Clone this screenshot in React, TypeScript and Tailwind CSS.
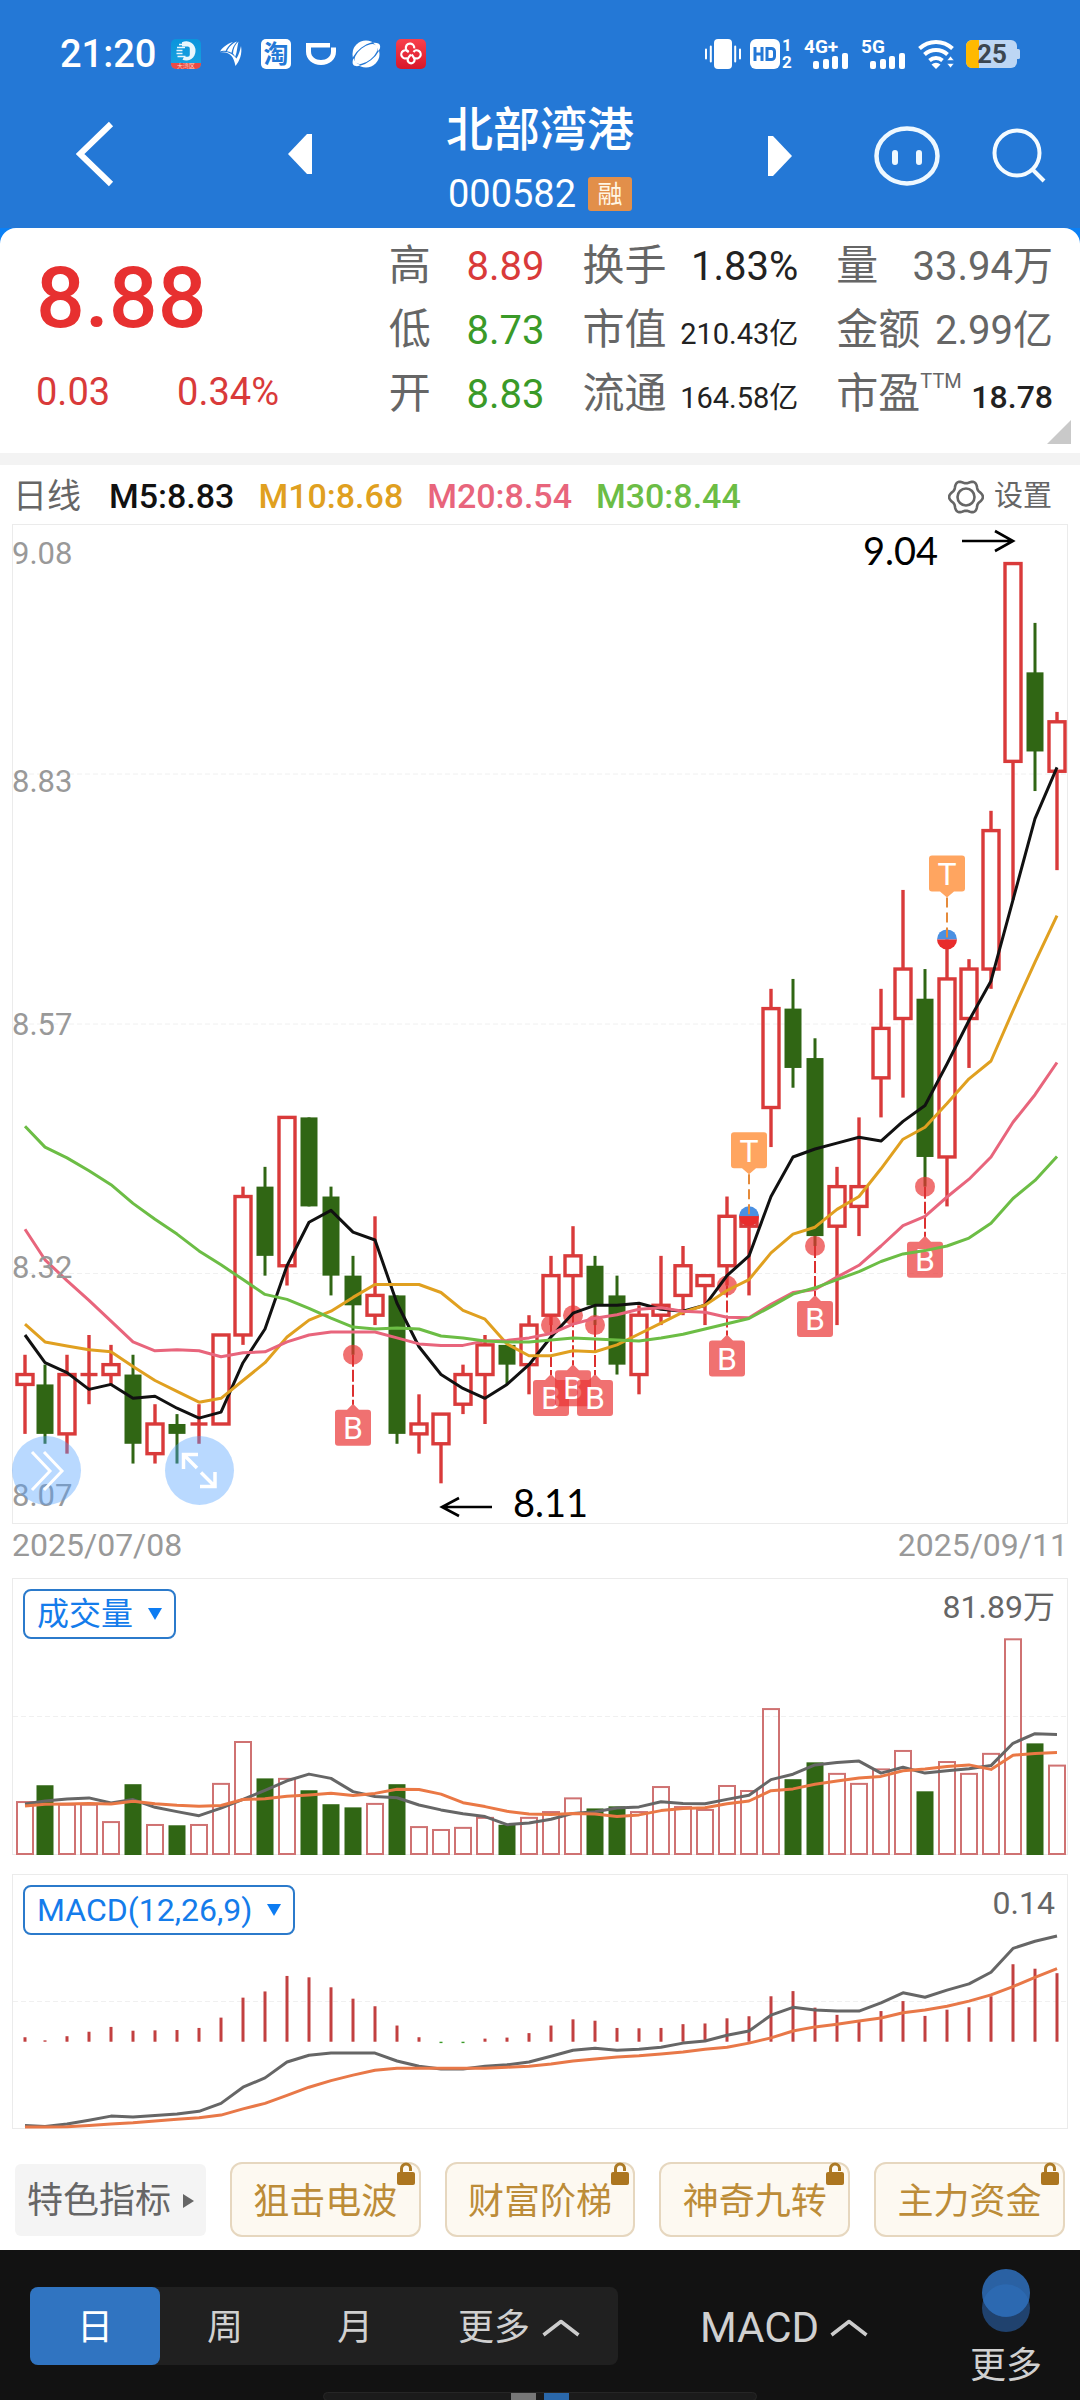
import React, { useState } from "react";

type Candle = [open: number, high: number, low: number, close: number];
type Marker = { day: number; kind: "B" | "T" };

// Daily candles, 2025/07/08 - 2025/09/11
const CANDLES: Candle[] = [
  [8.21, 8.24, 8.16, 8.22], [8.21, 8.23, 8.15, 8.16], [8.16, 8.24, 8.14, 8.22], [8.22, 8.26, 8.19, 8.22],
  [8.22, 8.25, 8.21, 8.23], [8.22, 8.24, 8.13, 8.15], [8.14, 8.19, 8.13, 8.17], [8.17, 8.18, 8.13, 8.16],
  [8.17, 8.19, 8.15, 8.17], [8.17, 8.26, 8.17, 8.26], [8.26, 8.41, 8.25, 8.4], [8.41, 8.43, 8.32, 8.34],
  [8.33, 8.48, 8.31, 8.48], [8.48, 8.48, 8.39, 8.39], [8.4, 8.41, 8.3, 8.32], [8.32, 8.34, 8.24, 8.29],
  [8.28, 8.38, 8.27, 8.3], [8.3, 8.3, 8.15, 8.16], [8.16, 8.2, 8.14, 8.17], [8.15, 8.18, 8.11, 8.18],
  [8.19, 8.23, 8.18, 8.22], [8.22, 8.26, 8.17, 8.25], [8.25, 8.25, 8.21, 8.23], [8.23, 8.28, 8.2, 8.27],
  [8.28, 8.34, 8.27, 8.32], [8.32, 8.37, 8.28, 8.34], [8.33, 8.34, 8.27, 8.29], [8.3, 8.32, 8.22, 8.23],
  [8.22, 8.29, 8.2, 8.28], [8.28, 8.34, 8.27, 8.29], [8.3, 8.35, 8.28, 8.33], [8.31, 8.32, 8.27, 8.32],
  [8.33, 8.4, 8.31, 8.38], [8.37, 8.38, 8.3, 8.38], [8.49, 8.61, 8.45, 8.59], [8.59, 8.62, 8.51, 8.53],
  [8.54, 8.56, 8.35, 8.36], [8.37, 8.43, 8.27, 8.41], [8.39, 8.48, 8.36, 8.41], [8.52, 8.61, 8.48, 8.57],
  [8.58, 8.71, 8.5, 8.63], [8.6, 8.63, 8.41, 8.44], [8.44, 8.66, 8.39, 8.62], [8.58, 8.64, 8.53, 8.63],
  [8.63, 8.79, 8.61, 8.77], [8.84, 9.04, 8.7, 9.04], [8.93, 8.98, 8.81, 8.85], [8.83, 8.89, 8.73, 8.88],
];

const CLOSES = CANDLES.map((c) => c[3]);

// Averages of the first days, they need closes from before the visible range
const M5_HEAD = [8.26, 8.232, 8.222, 8.205];
const M10_HEAD = [8.271, 8.253, 8.249, 8.245, 8.243, 8.228, 8.214, 8.203, 8.192];
const M20_HEAD = [
  8.367, 8.336, 8.315, 8.295, 8.274, 8.253, 8.244, 8.245, 8.244, 8.238, 8.242, 8.243, 8.253, 8.26, 8.263, 8.263,
  8.263, 8.257, 8.251,
];
const M30_HEAD = [
  8.471, 8.45, 8.439, 8.426, 8.412, 8.393, 8.377, 8.362, 8.345, 8.331, 8.316, 8.301, 8.296, 8.287, 8.277, 8.268,
  8.266, 8.267, 8.266, 8.259, 8.257, 8.254, 8.253, 8.253, 8.255, 8.257, 8.256, 8.255, 8.254,
];

const MARKERS: Marker[] = [
  { day: 15, kind: "B" },
  { day: 24, kind: "B" },
  { day: 25, kind: "B" },
  { day: 26, kind: "B" },
  { day: 32, kind: "B" },
  { day: 33, kind: "T" },
  { day: 36, kind: "B" },
  { day: 41, kind: "B" },
  { day: 42, kind: "T" },
];

const VOLUMES = [
  20.1, 26.1, 19.1, 19.1, 12.5, 26.5, 11.4, 10.9, 11.4, 27, 42.9, 28.7, 28.9, 24.2, 18.9, 17.7, 19.4, 26.5, 10.6, 9.5,
  10.3, 14.1, 11.1, 14.1, 16.3, 21.5, 17.3, 18.1, 16.3, 25.8, 18.2, 17.1, 26.2, 24.3, 55.4, 28.4, 34.8, 30.8, 27,
  32.5, 39.5, 23.8, 35.3, 30.8, 38.4, 81.89, 42, 33.94,
];
const VOL5_HEAD = [19, 20.1, 20.9, 21.3];
const VOL10_HEAD = [18.2, 18.9, 19, 19.2, 19, 20, 19.1, 18.5, 18.1];

// MACD pane grid: rows run from 40 (top) to 779 (bottom), zero is at 527
const MACD_TOP = 40;
const MACD_ZERO = 527;
const MACD_BARS = [
  13, 4, 16, 29, 43, 32, 33, 34, 40, 70, 128, 146, 191, 187, 158, 125, 103, 47, 13, -4, -4, 9, 12, 25, 47, 65, 61, 40,
  39, 40, 51, 53, 68, 74, 132, 147, 99, 78, 62, 89, 118, 75, 93, 100, 132, 225, 212, 199,
];
const MACD_DIF = [
  770, 773, 766, 755, 743, 746, 741, 737, 729, 706, 659, 632, 586, 566, 560, 560, 560, 583, 598, 606, 606, 598, 594,
  586, 569, 552, 546, 552, 549, 543, 531, 525, 508, 496, 450, 427, 435, 438, 438, 414, 385, 398, 377, 359, 325, 256,
  235, 220,
];
const MACD_DEA = [
  775, 775, 774, 770, 766, 762, 757, 752, 748, 740, 722, 706, 683, 659, 640, 624, 610, 604, 604, 604, 604, 604, 601,
  598, 592, 583, 577, 571, 568, 563, 557, 549, 543, 531, 516, 496, 484, 476, 467, 458, 443, 435, 424, 409, 391, 367,
  340, 315,
];

const RED = "#d93a3a";
const GREEN = "#306614";

const dayX = (i: number) => (i === 0 ? 13 : 11 + i * 22);
const priceY = (p: number) => (9.08 - p) * 989;
const volumeY = (v: number) => 276 - v * 2.634;
const macdY = (v: number) => (v - MACD_TOP) * 0.3444;

function movingAverage(values: number[], size: number, head: number[]) {
  return values.map((_, i) => {
    if (i < size - 1) return head[i];
    const slice = values.slice(i - size + 1, i + 1);
    return slice.reduce((a, b) => a + b, 0) / size;
  });
}

const toPoints = (values: number[], y: (v: number) => number) =>
  values.map((v, i) => `${dayX(i)},${y(v).toFixed(1)}`).join(" ");

const isUp = (i: number) => CANDLES[i][3] >= CANDLES[i][0];

function Line({ values, y, color }: { values: number[]; y: (v: number) => number; color: string }) {
  return <polyline points={toPoints(values, y)} fill="none" stroke={color} strokeWidth={3} strokeLinejoin="round" />;
}

function GridLine({ y }: { y: number }) {
  return <line x1={1} x2={1055} y1={y} y2={y} stroke="#f0f0f0" strokeWidth={1} strokeDasharray="5 3" />;
}

function Frame({ height }: { height: number }) {
  return <rect x={0.5} y={0.5} width={1055} height={height - 1} fill="none" stroke="#ebebeb" />;
}

/* ---------- status bar ---------- */

function SignalBars() {
  return (
    <g fill="#fff">
      <rect x={9} y={22} width={6} height={8} rx={2} />
      <rect x={19} y={20} width={6} height={10} rx={2} />
      <rect x={28} y={17} width={6} height={13} rx={2} />
      <rect x={38} y={14} width={6} height={16} rx={2} />
    </g>
  );
}

function StatusBar() {
  return (
    <div className="flex h-[108px] items-center justify-between pl-[60px] pr-[60px] text-white">
      <div className="flex items-center gap-[15px]">
        <span className="text-[38px] font-medium leading-none">21:20</span>
        <svg className="overflow-visible" width={30} height={30} viewBox="0 0 30 30" aria-hidden="true">
          <defs>
            <linearGradient id="bank" x1="0" y1="0" x2="0" y2="1">
              <stop offset="0" stopColor="#0a94dc" />
              <stop offset="1" stopColor="#1aa3e0" />
            </linearGradient>
          </defs>
          <rect width={30} height={30} rx={5} fill="url(#bank)" />
          <path d="M0 24h30v1a5 5 0 0 1-5 5H5a5 5 0 0 1-5-5z" fill="#ea4a45" />
          <path
            d="M11 3.300A9.300 9.300 0 0 1 24.500 12a9.400 9.400 0 0 1-13 8.800l1.500-3h3.800a2 2 0 0 0 2-2V9.500a2 2 0 0 0-2-2H11z"
            fill="#e8f6fd"
          />
          <path d="M8 5.500h5M6 8.500h8M5.500 11.500h6M5.500 14.500h6M6.500 17.500h8" stroke="#e8f6fd" strokeWidth={1.4} />
          <text x={15} y={29} fontSize={6} textAnchor="middle" fill="#ffd9c8">大湾区</text>
        </svg>
        <svg width={30} height={30} viewBox="0 0 30 30" fill="#fff" aria-hidden="true">
          <path d="M4 12.500C6 9 10.500 5 17 3c-3.500 2.500-6 5.500-7.500 9-2-.3-3.700-.2-5.500.5z" />
          <path d="M11 12.300C12.500 8.500 16 4.500 21 2.500c-3 3.500-4.700 7-5.500 11.200-1.500-.8-2.800-1.200-4.500-1.400z" />
          <path d="M17 14.500c.3-4.500 2-9.200 5.500-12-1 4-1.200 7-2 11-.4 2-.9 3.200-1.500 4.500-.4-1.400-1-2.500-2-3.500z" />
          <path d="M4 13.500c5-1 9 .5 11.500 3.500 1.800 2.300 3 5 4 10C23.500 22 26.500 15 25 7c-1 5-2.300 9-4.500 12.500C17 15 10 11 4 13.500z" />
        </svg>
        <svg className="overflow-visible" width={30} height={30} viewBox="0 0 30 30" aria-hidden="true">
          <rect width={30} height={30} rx={5} fill="#fff" />
          <text x={15} y={24} fontSize={25} fontWeight={700} textAnchor="middle" fill="#2478d6">淘</text>
        </svg>
        <svg width={30} height={30} viewBox="0 0 30 30" aria-hidden="true">
          <path d="M0 4h24v4.500H5v4C5 18 9.500 21 15 21s10-3 10-8.500v-4h5v4C30 20.500 23.500 26 15 26S0 20.500 0 12.500z" fill="#fff" />
        </svg>
        <svg width={30} height={30} viewBox="0 0 30 30" aria-hidden="true">
          <circle cx={15} cy={15} r={13.5} fill="#fff" />
          <g transform="rotate(-38 15 15)">
            <ellipse cx={15} cy={15} rx={17} ry={8} fill="#2478d6" />
            <ellipse cx={15} cy={15} rx={13.500} ry={7} fill="#fff" />
            <path d="M2.500 10.500C-1 13-2.500 15-1 17.500s4 2.700 5 2.500C2 18 1.500 14 2.500 10.500zM27.500 10.500c3.500 2.500 5 4.500 3.500 7s-4 2.700-5 2.500c2-2 2.500-6 1.500-9.500z" fill="#fff" />
          </g>
        </svg>
        <svg width={30} height={30} viewBox="0 0 30 30" aria-hidden="true">
          <defs>
            <linearGradient id="union" x1="0" y1="0" x2="0" y2="1">
              <stop offset="0" stopColor="#f8404c" />
              <stop offset="1" stopColor="#d8172a" />
            </linearGradient>
          </defs>
          <rect width={30} height={30} rx={5} fill="url(#union)" />
          <g fill="none" stroke="#fff" strokeWidth={2.2}>
            <path d="M12.800 12.800a4.200 4.200 0 1 1 5.400-3.500" />
            <path d="M17.500 13a4 4 0 1 1 1.500 6" />
            <path d="M15 15.500c-1.500 1.700-3.400 3.200-3.400 5.300a3.500 3.500 0 0 0 7 0c0-2-1.600-3.500-3-5.300" />
            <path d="M12.500 13a4 4 0 1 0-1.500 6" />
          </g>
        </svg>
      </div>
      <div className="flex items-center">
        <svg width={36} height={30} viewBox="0 0 36 30" fill="#fff" aria-hidden="true">
          <rect x={9} y={0} width={18} height={30} rx={4} />
          <path d="M1 10.500v9M5.800 7.500v15M30.200 7.500v15M35 10.500v9" stroke="#fff" strokeWidth={2} strokeLinecap="round" />
        </svg>
        <svg className="ml-[9px] overflow-visible" width={43} height={30} viewBox="0 0 43 30" aria-hidden="true">
          <rect width={30} height={30} rx={6} fill="#fff" />
          <path d="M5 8v14M12 8v14M5 15h7M17 9.500h4.500a3 3 0 0 1 3 3v5a3 3 0 0 1-3 3H17z" fill="none" stroke="#2478d6" strokeWidth={3} />
          <text x={37} y={12} fontSize={17} fontWeight={700} textAnchor="middle" fill="#fff">1</text>
          <text x={37} y={29} fontSize={17} fontWeight={700} textAnchor="middle" fill="#fff">2</text>
        </svg>
        <svg className="ml-[11px] overflow-visible" width={45} height={30} viewBox="0 0 45 30" aria-hidden="true">
          <text x={0} y={14} fontSize={19} fontWeight={700} fill="#fff">4G+</text>
          <SignalBars />
        </svg>
        <svg className="ml-3 overflow-visible" width={45} height={30} viewBox="0 0 45 30" aria-hidden="true">
          <text x={0} y={14} fontSize={19} fontWeight={700} fill="#fff">5G</text>
          <SignalBars />
        </svg>
        <svg className="ml-3" width={37} height={30} viewBox="0 0 37 30" aria-hidden="true">
          <g fill="none" stroke="#fff" strokeWidth={4}>
            <path d="M1.500 9.500a24 24 0 0 1 33 0" />
            <path d="M6.500 15.500a17 17 0 0 1 23 0" />
            <path d="M11.500 21.500a10 10 0 0 1 13 0" />
          </g>
          <path d="M13.500 25.500a7 7 0 0 1 9 0L18 30z" fill="#fff" />
          <path d="M29 21.500l3.500-4.500 3.500 4.500zM29 24.500h7L32.500 29z" fill="#fff" stroke="#2478d6" strokeWidth={0.6} />
        </svg>
        <svg className="ml-[11px] overflow-visible" width={54} height={28} viewBox="0 0 54 28" aria-label="25%">
          <rect width={51} height={28} rx={6} fill="#bdd6f4" />
          <path d="M51 9h1.500a1.500 1.500 0 0 1 1.500 1.500v7a1.500 1.500 0 0 1-1.500 1.500H51z" fill="#bdd6f4" />
          <path d="M6 0h7v28H6a6 6 0 0 1-6-6V6a6 6 0 0 1 6-6z" fill="#ffb900" />
          <text x={26} y={23} fontSize={26} fontWeight={700} textAnchor="middle" fill="#3c4650">25</text>
        </svg>
      </div>
    </div>
  );
}

/* ---------- title bar ---------- */

function TitleBar() {
  return (
    <div className="grid h-[120px] grid-cols-[1fr_auto_1fr] items-start text-white">
      <div className="flex items-center justify-between pl-[76px] pr-[134px] pt-[13px]">
        <button aria-label="返回">
          <svg width={38} height={66} viewBox="0 0 38 66">
            <path d="M35 3L4 33l31 30" fill="none" stroke="#fff" strokeWidth={6} />
          </svg>
        </button>
        <button aria-label="上一只">
          <svg width={24} height={40} viewBox="0 0 24 40">
            <path d="M24 0h-5L0 20l19 20h5z" fill="#fff" />
          </svg>
        </button>
      </div>
      <div className="-mt-0.5 flex flex-col items-center">
        <h1 className="text-[47px] font-medium leading-[48px]">北部湾港</h1>
        <div className="mt-5 flex items-center gap-3">
          <span className="text-[38px] leading-[40px]">000582</span>
          <span className="flex h-[34px] w-11 items-center justify-center rounded-[3px] bg-[#e28f4a] text-[25px] leading-none text-[#fff6e4]">
            融
          </span>
        </div>
      </div>
      <div className="flex items-center justify-between pl-[134px] pr-[34px] pt-[18px]">
        <button aria-label="下一只">
          <svg width={24} height={40} viewBox="0 0 24 40">
            <path d="M0 0h5l19 20L5 40H0z" fill="#fff" />
          </svg>
        </button>
        <div className="flex items-center gap-[52px]">
          <button aria-label="助手">
            <svg width={66} height={60} viewBox="0 0 66 60">
              <ellipse cx={33} cy={30} rx={30.500} ry={27.500} fill="none" stroke="#eef8ff" strokeWidth={4.500} />
              <path d="M21 27v9M45 27v9" stroke="#eef8ff" strokeWidth={6} strokeLinecap="round" />
            </svg>
          </button>
          <button aria-label="搜索">
            <svg width={54} height={56} viewBox="0 0 54 56">
              <circle cx={25} cy={25} r={22.500} fill="none" stroke="#f4fbff" strokeWidth={4} />
              <path d="M41 42l11 11" stroke="#f4fbff" strokeWidth={4} />
            </svg>
          </button>
        </div>
      </div>
    </div>
  );
}

/* ---------- quote ---------- */

type StatProps = { label: React.ReactNode; value: string; className?: string };

function Stat({ label, value, className = "text-[40px] text-[#666]" }: StatProps) {
  return (
    <div className="flex h-16 items-baseline justify-between whitespace-nowrap leading-[64px]">
      <dt className="text-[42px] text-[#666]">{label}</dt>
      <dd className={className}>{value}</dd>
    </div>
  );
}

function Quote() {
  return (
    <section className="bg-[#0b80f5]">
      <div className="relative flex h-[225px] rounded-t-2xl bg-white pt-1.5">
        <div className="w-[36%] pl-9 text-[#d93a3a]">
          <p className="mt-5 text-[86px] font-medium leading-[88px] text-[#e73030]">8.88</p>
          <p className="mt-[30px] flex gap-[67px] text-[38px] leading-[40px]">
            <span>0.03</span>
            <span>0.34%</span>
          </p>
        </div>
        <dl className="grid flex-1 grid-cols-[156fr_216fr_217fr] content-start gap-x-[38px] pr-[27px]">
          <Stat label="高" value="8.89" className="text-[40px] text-[#d93a3a]" />
          <Stat label="换手" value="1.83%" className="text-[40px] text-[#222]" />
          <Stat label="量" value="33.94万" />
          <Stat label="低" value="8.73" className="text-[40px] text-[#3a9a28]" />
          <Stat label="市值" value="210.43亿" className="text-[29px] text-[#222]" />
          <Stat label="金额" value="2.99亿" />
          <Stat label="开" value="8.83" className="text-[40px] text-[#3a9a28]" />
          <Stat label="流通" value="164.58亿" className="text-[29px] text-[#222]" />
          <Stat
            label={
              <>
                市盈<span className="inline-block -translate-y-5 text-[20px] leading-none">TTM</span>
              </>
            }
            value="18.78"
            className="text-[32px] font-medium text-[#222]"
          />
        </dl>
        <svg className="absolute bottom-[9px] right-[9px]" width={24} height={24} viewBox="0 0 24 24" aria-hidden="true">
          <path d="M24 0v24H0z" fill="#c9c9c9" />
        </svg>
      </div>
    </section>
  );
}

/* ---------- price chart ---------- */

// Six-lobed outline, r = 15.3 + 1.6 cos 6t
const GEAR = Array.from({ length: 72 }, (_, k) => {
  const t = (k * Math.PI) / 36;
  const r = 15.3 + 1.6 * Math.cos(6 * t);
  return `${(18 + r * Math.cos(t)).toFixed(2)},${(18 + r * Math.sin(t)).toFixed(2)}`;
}).join(" ");

function Legend() {
  return (
    <div className="flex h-[59px] items-center justify-between pl-[13px] pr-7 pt-1 text-[34px] font-medium">
      <div className="flex items-baseline gap-6 whitespace-nowrap">
        <span className="pr-1 font-normal text-[#666]">日线</span>
        <span className="text-[#111]">M5:8.83</span>
        <span className="text-[#e0a020]">M10:8.68</span>
        <span className="text-[#e8657c]">M20:8.54</span>
        <span className="text-[#6cbd45]">M30:8.44</span>
      </div>
      <button className="flex items-center gap-[10px] text-[29px] font-normal text-[#666]">
        <svg width={36} height={36} viewBox="0 0 36 36" fill="none" stroke="#666" strokeWidth={2.600}>
          <polygon points={GEAR} />
          <circle cx={18} cy={18} r={8.5} />
        </svg>
        设置
      </button>
    </div>
  );
}

function CandleShape({ i }: { i: number }) {
  const [open, high, low, close] = CANDLES[i];
  const x = dayX(i);
  const top = priceY(Math.max(open, close));
  const bottom = priceY(Math.min(open, close));
  if (!isUp(i)) {
    return (
      <g fill={GREEN}>
        <rect x={x - 1.5} y={priceY(high)} width={3} height={priceY(low) - priceY(high)} />
        <rect x={x - 8.5} y={top} width={17} height={bottom - top} />
      </g>
    );
  }
  return (
    <g stroke={RED} strokeWidth={3.4} fill="none">
      <line x1={x} x2={x} y1={priceY(high)} y2={top} />
      <line x1={x} x2={x} y1={bottom} y2={priceY(low)} />
      {top === bottom ? (
        <line x1={x - 8.5} x2={x + 8.5} y1={top} y2={top} />
      ) : (
        <rect x={x - 8} y={top} width={16} height={bottom - top} />
      )}
    </g>
  );
}

function BuyMarker({ day }: { day: number }) {
  return (
    <g transform={`translate(${dayX(day)} ${priceY(CANDLES[day][2])})`}>
      <circle r={10} fill="#e93535" fillOpacity={0.7} />
      <line y1={0} y2={50} stroke="#dc3030" strokeWidth={2} strokeDasharray="12 3" />
      <path d="M-15 55h9L0 49l6 6h9a3 3 0 0 1 3 3v30a3 3 0 0 1-3 3h-30a3 3 0 0 1-3-3v-30a3 3 0 0 1 3-3z" fill="#e93535" fillOpacity={0.7} />
      <text y={84} fontSize={32} textAnchor="middle" fill="#fff">B</text>
    </g>
  );
}

function SwingMarker({ day }: { day: number }) {
  return (
    <g transform={`translate(${dayX(day)} ${priceY(CANDLES[day][1])})`}>
      <path d="M-10 0a10 10 0 0 1 20 0z" fill="#4a90e2" />
      <path d="M-10 0a10 10 0 0 0 20 0z" fill="#e82c2c" />
      <line y1={-42} y2={0} stroke="#e58a3a" strokeWidth={2} strokeDasharray="10 5" />
      <path d="M-15-84h30a3 3 0 0 1 3 3v30a3 3 0 0 1-3 3H7l-7 6-7-6h-8a3 3 0 0 1-3-3v-30a3 3 0 0 1 3-3z" fill="#ffa560" />
      <text y={-54} fontSize={32} textAnchor="middle" fill="#fff">T</text>
    </g>
  );
}

const AXIS = [
  { label: "9.08", y: 40 },
  { label: "8.83", y: 268 },
  { label: "8.57", y: 511 },
  { label: "8.32", y: 754 },
  { label: "8.07", y: 982 },
];

function PriceChart() {
  return (
    <div className="relative">
      <svg className="block h-auto w-full" viewBox="0 0 1056 1000" role="img" aria-label="日线">
        <GridLine y={250} />
        <GridLine y={500} />
        <GridLine y={749.5} />
        <Frame height={1000} />
        {CANDLES.map((_, i) => (
          <CandleShape key={i} i={i} />
        ))}
        {MARKERS.map((m) =>
          m.kind === "B" ? <BuyMarker key={m.day} day={m.day} /> : <SwingMarker key={m.day} day={m.day} />
        )}
        <Line values={movingAverage(CLOSES, 5, M5_HEAD)} y={priceY} color="#111" />
        <Line values={movingAverage(CLOSES, 10, M10_HEAD)} y={priceY} color="#e0a020" />
        <Line values={movingAverage(CLOSES, 20, M20_HEAD)} y={priceY} color="#e8657c" />
        <Line values={movingAverage(CLOSES, 30, M30_HEAD)} y={priceY} color="#6cbd45" />
        <g fontSize={31} fill="#999">
          {AXIS.map((a) => (
            <text key={a.label} x={0} y={a.y}>
              {a.label}
            </text>
          ))}
        </g>
        <g className="font-[Lato]" fontSize={38} fill="#000">
          <text x={851} y={41}>9.04</text>
          <text x={501} y={993}>8.11</text>
        </g>
        <g fill="none" stroke="#000" strokeWidth={2.600}>
          <path d="M950 17h50M983 7l18 10-18 10" />
          <path d="M480 983h-50M447 974l-17 9 17 9" />
        </g>
      </svg>
      <div className="absolute bottom-[19px] left-0 flex gap-[84px]">
        <button aria-label="展开工具" className="h-[69px] w-[69px] rounded-full bg-[#4fa0ff]/40">
          <svg width={69} height={69} viewBox="0 0 69 69" fill="none" stroke="#fff" strokeWidth={3}>
            <path d="M20 16l18 19-18 19M32 16l18 19-18 19" />
          </svg>
        </button>
        <button aria-label="全屏" className="h-[69px] w-[69px] rounded-full bg-[#4fa0ff]/40">
          <svg width={69} height={69} viewBox="0 0 69 69" fill="none" stroke="#fff" strokeWidth={3.500}>
            <path d="M33 18.500H18.500V33M18.500 18.500L32 32M50 36v14.500H35M49.500 50L36 36.500" />
          </svg>
        </button>
      </div>
    </div>
  );
}

/* ---------- indicator panes ---------- */

type PaneHeaderProps = { id: string; label: string; options: string[]; value: string };

function PaneHeader({ id, label, options, value }: PaneHeaderProps) {
  return (
    <div className="absolute inset-x-0 top-0 flex items-start justify-between pl-[11px] pr-[13px] pt-[11px]">
      <div className="relative">
        <label htmlFor={id} className="sr-only">
          {label}
        </label>
        <select
          id={id}
          className="h-[50px] appearance-none rounded-lg border-2 border-[#2b7acb] bg-transparent pl-3 pr-[40px] text-[32px] leading-[44px] text-[#147ceb]"
        >
          {options.map((o) => (
            <option key={o}>{o}</option>
          ))}
        </select>
        <svg className="pointer-events-none absolute right-[14px] top-[19px]" width={14} height={12} viewBox="0 0 14 12">
          <path d="M0 0h14L7 12z" fill="#0d7cf2" />
        </svg>
      </div>
      <span className="text-[32px] leading-[36px] text-[#666]">{value}</span>
    </div>
  );
}

function VolumePane() {
  return (
    <div className="relative">
      <svg className="block h-auto w-full" viewBox="0 0 1056 277" role="img" aria-label="成交量">
        <GridLine y={138.500} />
        <Frame height={277} />
        {VOLUMES.map((v, i) =>
          isUp(i) ? (
            <rect key={i} x={dayX(i) - 8} y={volumeY(v) + 1} width={16} height={v * 2.634 - 1} fill="none" stroke="#cf7272" strokeWidth={2} />
          ) : (
            <rect key={i} x={dayX(i) - 8.5} y={volumeY(v)} width={17} height={v * 2.634 + 1} fill={GREEN} />
          )
        )}
        <Line values={movingAverage(VOLUMES, 5, VOL5_HEAD)} y={volumeY} color="#666" />
        <Line values={movingAverage(VOLUMES, 10, VOL10_HEAD)} y={volumeY} color="#ea7845" />
      </svg>
      <PaneHeader id="pane-volume" label="副图一" options={["成交量"]} value="81.89万" />
    </div>
  );
}

function MacdPane() {
  return (
    <div className="relative mt-[19px]">
      <svg className="block h-auto w-full" viewBox="0 0 1056 255" role="img" aria-label="MACD">
        <GridLine y={127.500} />
        <Frame height={255} />
        {MACD_BARS.map((v, i) => (
          <rect
            key={i}
            x={dayX(i) - 1.5}
            y={macdY(MACD_ZERO - Math.max(v, 0))}
            width={3}
            height={Math.abs(v) * 0.3444}
            fill={v > 0 ? "#c24040" : "#3a9a28"}
          />
        ))}
        <Line values={MACD_DIF} y={macdY} color="#666" />
        <Line values={MACD_DEA} y={macdY} color="#e87848" />
      </svg>
      <PaneHeader id="pane-macd" label="副图二" options={["MACD(12,26,9)"]} value="0.14" />
    </div>
  );
}

/* ---------- chips ---------- */

function Chips() {
  return (
    <div className="grid grid-cols-5 items-center gap-6 px-[15px] pb-[13px] pt-[33px] text-[36px]">
      <button className="flex h-[72px] items-center justify-center gap-3 whitespace-nowrap rounded-md bg-[#f4f4f4] pt-0.5 text-[#666]">
        特色指标
        <svg width={11} height={14} viewBox="0 0 11 14">
          <path d="M0 0l11 7-11 7z" fill="#666" />
        </svg>
      </button>
      {["狙击电波", "财富阶梯", "神奇九转", "主力资金"].map((name) => (
        <button
          key={name}
          className="relative h-[75px] whitespace-nowrap rounded-xl border-2 border-[#e6d7bf] bg-[#fdf9f1] pt-1 text-[#bc8c38]"
        >
          {name}
          <svg className="absolute -top-0.5 right-1" width={18} height={23} viewBox="0 0 18 23">
            <path d="M4.500 10V6.500a4.500 4.500 0 0 1 9 0V9" fill="none" stroke="#ac7a26" strokeWidth={3} />
            <rect y={10} width={18} height={13} rx={2} fill="#ac7620" />
          </svg>
        </button>
      ))}
    </div>
  );
}

/* ---------- bottom bar ---------- */

function Caret() {
  return (
    <svg width={38} height={18} viewBox="0 0 38 18" fill="none" stroke="#ccc" strokeWidth={3.500}>
      <path d="M1.500 16L19 2.500 36.500 16" strokeLinejoin="round" />
    </svg>
  );
}

const PERIODS = ["日", "周", "月"];

function BottomBar() {
  const [period, setPeriod] = useState("日");
  return (
    <nav className="bg-[#121212] pb-0.5 text-[36px] text-[#d0d0d0]">
      <div className="flex items-center pb-2 pl-[30px] pr-[38px] pt-[17px]">
        <div className="flex h-[78px] rounded-lg bg-[#202020]">
          {PERIODS.map((p) => (
            <button
              key={p}
              onClick={() => setPeriod(p)}
              className={`w-[130px] rounded-lg pt-1 ${period === p ? "bg-[#3074c1] text-white" : ""}`}
            >
              {p}
            </button>
          ))}
          <button className="flex w-[198px] items-center justify-center gap-3 pt-1">
            更多
            <Caret />
          </button>
        </div>
        <button className="ml-[82px] flex items-center gap-[11px] pt-1 text-[42px]">
          MACD
          <Caret />
        </button>
        <button className="ml-auto flex flex-col items-center gap-4 pt-0.5 leading-[36px]">
          <svg width={48} height={63} viewBox="0 0 48 63">
            <circle cx={24} cy={39} r={24} fill="#20426e" />
            <circle cx={24} cy={24} r={24} fill="#2a61a3" />
            <path d="M1.300 31.500a24 24 0 0 1 45.400 0 24 24 0 0 1-45.400 0z" fill="#2c69b1" />
          </svg>
          更多
        </button>
      </div>
      <div className="mx-auto flex h-[9px] w-[434px] justify-center gap-2 rounded-full border border-[#262626] bg-[#1b1b1b]">
        <span className="w-[25px] bg-[#777]" />
        <span className="w-[25px] bg-[#2a68ab]" />
      </div>
    </nav>
  );
}

export default function App() {
  return (
    <div className="min-h-screen bg-white font-[Roboto,'Noto_Sans_CJK_SC',sans-serif]">
      <header className="bg-[#2478d6]">
        <StatusBar />
        <TitleBar />
      </header>
      <Quote />
      <div className="h-3 bg-[#f3f3f3]" />
      <main>
        <Legend />
        <div className="px-3">
          <PriceChart />
          <div className="flex h-[54px] items-center justify-between pb-3 text-[32px] text-[#999]">
            <span>2025/07/08</span>
            <span>2025/09/11</span>
          </div>
          <VolumePane />
          <MacdPane />
        </div>
        <Chips />
      </main>
      <BottomBar />
    </div>
  );
}
